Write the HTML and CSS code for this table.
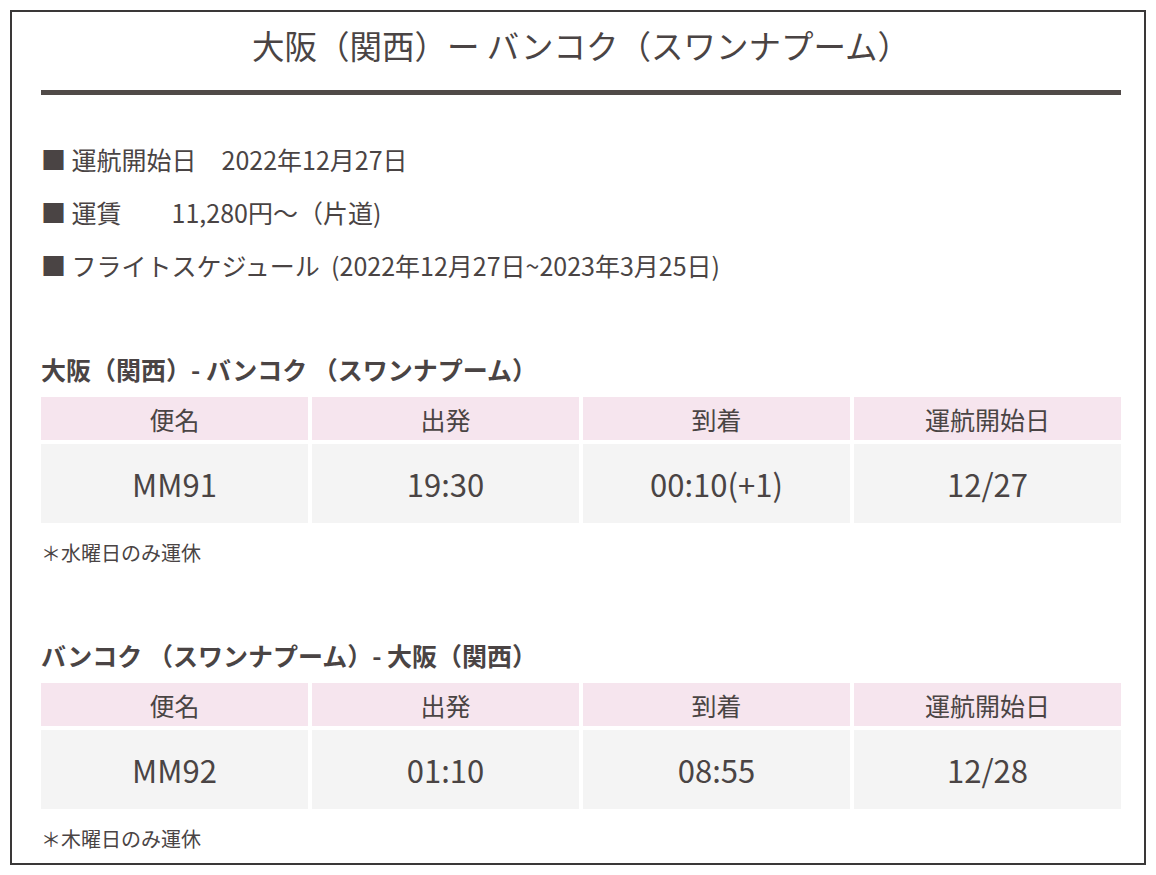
FILE: index.html
```html
<!DOCTYPE html>
<html lang="ja">
<head>
<meta charset="utf-8">
<title>大阪（関西）ー バンコク（スワンナプーム）</title>
<link rel="stylesheet" href="styles.css">
</head>
<body>
<div class="box">
  <h1 class="title">大阪（関西）ー バンコク（スワンナプーム）</h1>
  <div class="rule"></div>
  <ul class="info">
    <li>■ 運航開始日　2022年12月27日</li>
    <li>■ 運賃　　11,280円～（片道)</li>
    <li>■ フライトスケジュール&nbsp; (2022年12月27日~2023年3月25日)</li>
  </ul>

  <h2 class="route route-first">大阪（関西）- バンコク （スワンナプーム）</h2>
  <div class="sched">
    <div class="th">便名</div>
    <div class="th">出発</div>
    <div class="th">到着</div>
    <div class="th">運航開始日</div>
    <div class="td">MM91</div>
    <div class="td">19:30</div>
    <div class="td">00:10(+1)</div>
    <div class="td">12/27</div>
  </div>
  <p class="note">＊水曜日のみ運休</p>

  <h2 class="route route-second">バンコク （スワンナプーム）- 大阪（関西）</h2>
  <div class="sched">
    <div class="th">便名</div>
    <div class="th">出発</div>
    <div class="th">到着</div>
    <div class="th">運航開始日</div>
    <div class="td">MM92</div>
    <div class="td">01:10</div>
    <div class="td">08:55</div>
    <div class="td">12/28</div>
  </div>
  <p class="note">＊木曜日のみ運休</p>
</div>
</body>
</html>
```

FILE: styles.css
```css
html, body {
  margin: 0;
  padding: 0;
  background: #ffffff;
}

body {
  font-family: "Noto Sans CJK JP", "Noto Sans", sans-serif;
  color: #4a4444;
}

.box {
  margin: 10px;
  border: 2px solid #3a3838;
  padding: 9px 23px 10px 29px;
  box-sizing: border-box;
  height: 855px;
}

.title {
  margin: 0;
  font-size: 32.5px;
  font-weight: 400;
  line-height: 48px;
  text-align: center;
}

.rule {
  margin-top: 21px;
  height: 5px;
  background: #504a48;
}

.info {
  list-style: none;
  margin: 38px 0 0 0;
  padding: 0;
  font-size: 25px;
  line-height: 53px;
}

.route {
  margin: 61px 0 0 0;
  font-size: 25px;
  font-weight: 700;
  line-height: 33px;
}

.route-second {
  margin-top: 73px;
}

.sched {
  margin-top: 11px;
  display: grid;
  grid-template-columns: repeat(4, 1fr);
  gap: 4px;
}

.th {
  height: 43px;
  background: #f6e5ee;
  display: flex;
  align-items: center;
  justify-content: center;
  font-size: 25px;
}

.td {
  height: 79px;
  background: #f4f4f4;
  display: flex;
  align-items: center;
  justify-content: center;
  font-size: 31px;
}

.note {
  margin: 16px 0 0 0;
  font-size: 20px;
  line-height: 27px;
}
```
